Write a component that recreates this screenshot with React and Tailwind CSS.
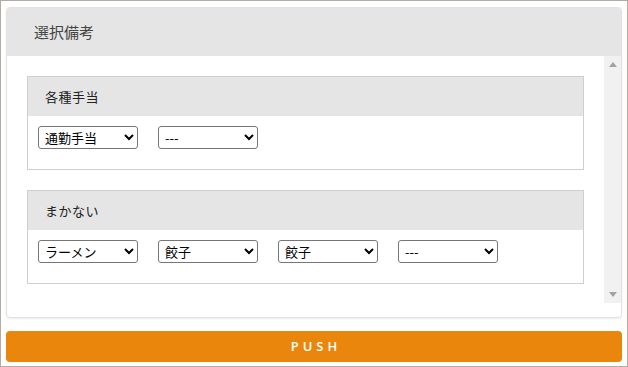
import React from "react";

/* ---------- Data ---------- */
const sections = [
  { title: "各種手当", selects: ["通勤手当", "---"] },
  { title: "まかない", selects: ["ラーメン", "餃子", "餃子", "---"] },
];

function Select({ value }) {
  return (
    <select
      defaultValue={value}
      className="w-[100px] h-[23px] border border-[#767676] rounded-[3px] bg-white pl-[2px] text-[13px] text-black"
    >
      <option value={value}>{value}</option>
    </select>
  );
}

function Panel({ title, selects }) {
  return (
    <div className="border border-[#cfcfcf]">
      <div className="h-[39px] bg-[#e5e5e5] flex items-center pl-[17px] text-[13px] text-[#222] tracking-[0.5px]">
        {title}
      </div>
      <div className="flex gap-[20px] pl-[10px] pt-[10px] pb-[20px]">
        {selects.map((s, i) => (
          <Select key={i} value={s} />
        ))}
      </div>
    </div>
  );
}

export default function App() {
  return (
    <div className="w-[628px] h-[367px] border border-[#b3aca5] bg-white pl-[5px] pt-[6px] font-['Noto_Sans_CJK_JP','Noto_Sans',sans-serif]">
      {/* Card */}
      <div className="w-[616px] border border-[#e2e2e2] rounded-[4px] bg-white shadow-[0_1px_2px_rgba(0,0,0,0.08)] pb-[14px]">
        <div className="h-[48px] bg-[#e5e5e5] rounded-t-[3px] flex items-center pl-[27px] text-[15px] text-[#444]">
          選択備考
        </div>
        <div className="flex h-[247px]">
          <div className="flex-1 flex flex-col gap-[20px] p-[20px]">
            {sections.map((s) => (
              <Panel key={s.title} title={s.title} selects={s.selects} />
            ))}
          </div>
          {/* Scrollbar */}
          <div className="w-[17px] bg-[#f1f1f1] flex flex-col items-center justify-between py-[6px]">
            <svg width="8" height="5" viewBox="0 0 8 5">
              <path d="M0 5 L4 0 L8 5 Z" fill="#a3a3a3" />
            </svg>
            <svg width="8" height="5" viewBox="0 0 8 5">
              <path d="M0 0 L4 5 L8 0 Z" fill="#a3a3a3" />
            </svg>
          </div>
        </div>
      </div>
      {/* Button */}
      <button className="mt-[13px] w-[616px] h-[31px] rounded-[4px] bg-[#eb860c] text-white text-[13px] font-semibold tracking-[4px] font-['Open_Sans',sans-serif] flex items-center justify-center pl-[4px]">
        PUSH
      </button>
    </div>
  );
}
